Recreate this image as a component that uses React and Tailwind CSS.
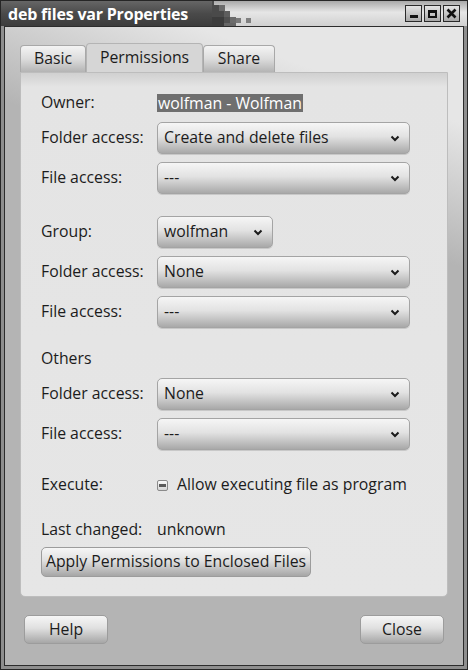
const font = { fontFamily: '"Open Sans", Lato, sans-serif' };

const Chevron = () => (
  <svg width="10" height="7" viewBox="0 0 10 7" className="shrink-0">
    <polyline points="1.5,1.5 5,5 8.5,1.5" fill="none" stroke="#1a1a1a" strokeWidth="2" />
  </svg>
);

const Combo = ({ value, width = 'w-[253px]' }) => (
  <div
    className={`${width} h-[32px] flex items-center justify-between pl-[6px] pr-[9px] rounded-[5px] border border-[#a4a4a4] bg-[linear-gradient(to_bottom,#f6f6f6,#e2e2e2_45%,#a9a9a9)] shadow-[0_1px_0_#c8c8c8] text-[#1c1c1c]`}
  >
    <span>{value}</span>
    <Chevron />
  </div>
);

const Row = ({ label, children, className = '' }) => (
  <div className={`flex items-center h-[32px] ${className}`}>
    <span className="w-[116px] shrink-0">{label}</span>
    {children}
  </div>
);

const Button = ({ children, className = '' }) => (
  <div
    className={`flex items-center justify-center rounded-[5px] border border-[#9c9c9c] bg-[linear-gradient(to_bottom,#f6f6f6,#e0e0e0_45%,#a6a6a6)] text-[#1c1c1c] whitespace-nowrap ${className}`}
  >
    {children}
  </div>
);

const WinButton = ({ children }) => (
  <div className="w-[17px] h-[17px] border border-[#2a2a2a] bg-[linear-gradient(to_bottom,#e4e4e4,#a8a8a8)] flex items-center justify-center">
    {children}
  </div>
);

const TitleBar = () => (
  <div className="h-[25px] flex shrink-0">
    <div className="w-[211px] bg-[linear-gradient(to_bottom,#666,#4a4a4a_50%,#3c3c3c)] flex items-center pl-[7px]">
      <span className="text-white font-bold text-[16px] leading-none whitespace-nowrap tracking-[-0.2px]" style={font}>
        deb files var Properties
      </span>
    </div>
    <div className="flex-1 relative bg-[linear-gradient(to_bottom,#a8a8a8,#e6e6e6_45%,#d0d0d0)] flex items-center justify-end pr-[7px] gap-[2px]">
      <svg width="48" height="25" viewBox="0 0 48 25" className="absolute left-0 top-0">
        <polygon points="0,0 2,0 2,4 7,4 7,10 12,10 12,16 0,16" fill="#4a4a4a" />
        <rect x="0" y="16" width="12" height="9" fill="#3c3c3c" />
        <rect x="7" y="4" width="6" height="6" fill="#6a6a6a" />
        <rect x="12" y="10" width="6" height="6" fill="#5e5e5e" />
        <rect x="12" y="16" width="6" height="6" fill="#505050" />
        <rect x="18" y="16" width="6" height="6" fill="#6c6c6c" />
        <rect x="24" y="17" width="5" height="5" fill="#7a7a7a" />
        <rect x="34" y="17" width="5" height="5" fill="#808080" />
        <rect x="12" y="22" width="12" height="3" fill="#666" />
      </svg>
      <WinButton>
        <div className="w-[8px] h-[3px] bg-[#111] mt-[6px]" />
      </WinButton>
      <WinButton>
        <div className="w-[9px] h-[8px] border-2 border-[#111] border-t-[3px]" />
      </WinButton>
      <WinButton>
        <svg width="11" height="11" viewBox="0 0 11 11">
          <path d="M1.5 1.5 L9.5 9.5 M9.5 1.5 L1.5 9.5" stroke="#111" strokeWidth="2.6" />
        </svg>
      </WinButton>
    </div>
  </div>
);

const Tabs = () => (
  <div className="flex items-end h-[29px] text-[#1c1c1c]">
    <div className="w-[66px] h-[27px] flex items-center justify-center rounded-t-[4px] border border-b-0 border-[#a8a8a8] bg-[linear-gradient(to_bottom,#f4f4f4,#dcdcdc_50%,#b4b4b4)]">
      Basic
    </div>
    <div className="w-[117px] h-[29px] flex items-center justify-center rounded-t-[4px] border border-b-0 border-[#b4b4b4] bg-[#d6d6d6]">
      Permissions
    </div>
    <div className="w-[72px] h-[27px] flex items-center justify-center rounded-t-[4px] border border-b-0 border-[#a8a8a8] bg-[linear-gradient(to_bottom,#f4f4f4,#dcdcdc_50%,#b4b4b4)]">
      Share
    </div>
  </div>
);

export default function App() {
  return (
    <div className="w-[468px] h-[670px] flex flex-col border border-[#262626] bg-[#262626] text-[15.8px]" style={font}>
      <TitleBar />
      <div className="flex-1 flex bg-[#8e8e8e] px-[3px] pb-[3px]">
        <div className="flex-1 flex flex-col border border-[#2c2c2c] bg-[linear-gradient(200deg,#e6e6e6_0,#e6e6e6_12%,#b4b4b4_30%,#b4b4b4)] px-[15px] pt-[16px]">
          <Tabs />
          <div className="h-[525px] flex flex-col rounded-b-[5px] border border-[#bdbdbd] bg-[linear-gradient(to_bottom,#d0d0d0,#e4e4e4_14px,#e6e6e6)] pl-[20px] text-[#1c1c1c]">
            <Row label="Owner:" className="mt-[14px]">
              <span className="bg-[#6f6f6f] text-white px-px leading-[18px]">wolfman - Wolfman</span>
            </Row>
            <Row label="Folder access:" className="mt-[3px]">
              <Combo value="Create and delete files" />
            </Row>
            <Row label="File access:" className="mt-[8px]">
              <Combo value="---" />
            </Row>
            <Row label="Group:" className="mt-[22px]">
              <Combo value="wolfman" width="w-[116px]" />
            </Row>
            <Row label="Folder access:" className="mt-[8px]">
              <Combo value="None" />
            </Row>
            <Row label="File access:" className="mt-[8px]">
              <Combo value="---" />
            </Row>
            <Row label="Others" className="mt-[15px]" />
            <Row label="Folder access:" className="mt-[3px]">
              <Combo value="None" />
            </Row>
            <Row label="File access:" className="mt-[8px]">
              <Combo value="---" />
            </Row>
            <Row label="Execute:" className="mt-[19px]">
              <div className="w-[11px] h-[11px] rounded-[2px] border border-[#8a8a8a] bg-[linear-gradient(to_bottom,#fafafa,#d4d4d4)] flex items-center justify-center mr-[9px]">
                <div className="w-[7px] h-[3px] bg-[#5a5a5a]" />
              </div>
              <span>Allow executing file as program</span>
            </Row>
            <Row label="Last changed:" className="mt-[13px]">
              <span>unknown</span>
            </Row>
            <Button className="w-[270px] h-[30px] mt-px">Apply Permissions to Enclosed Files</Button>
          </div>
          <div className="flex justify-between px-[4px] mt-[18px]">
            <Button className="w-[84px] h-[29px]">Help</Button>
            <Button className="w-[84px] h-[29px]">Close</Button>
          </div>
        </div>
      </div>
    </div>
  );
}
